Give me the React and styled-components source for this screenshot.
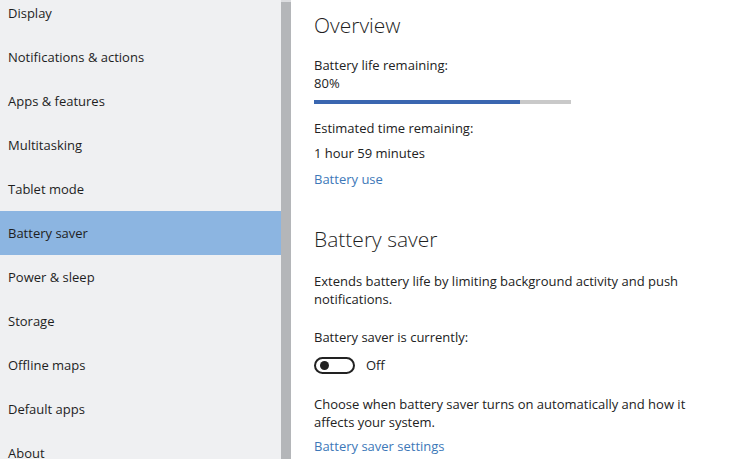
import React from 'react'
import styled, { createGlobalStyle } from 'styled-components'

const GlobalStyle = createGlobalStyle`
  html, body {
    margin: 0;
    padding: 0;
    background: #ffffff;
    overflow: hidden;
  }
  body {
    font-family: "Open Sans", "Noto Sans", sans-serif;
    color: #222;
  }
`

const navItems = [
  'Display',
  'Notifications & actions',
  'Apps & features',
  'Multitasking',
  'Tablet mode',
  'Battery saver',
  'Power & sleep',
  'Storage',
  'Offline maps',
  'Default apps',
  'About',
]

const App = () => {
  const battery = 80
  return (
    <>
      <GlobalStyle />
      <Window>
        <Sidebar>
          <NavList>
            {navItems.map((item) => (
              <NavItem key={item} $active={item === 'Battery saver'}>{item}</NavItem>
            ))}
          </NavList>
        </Sidebar>
        <ScrollTrack />
        <Content>
          <Heading>Overview</Heading>
          <Label $mt={17}>Battery life remaining:</Label>
          <Label>{battery}%</Label>
          <Bar>
            <BarFill style={{ width: battery + '%' }} />
          </Bar>
          <Label $mt={15}>Estimated time remaining:</Label>
          <Label $mt={7}>1 hour 59 minutes</Label>
          <Link $mt={8}>Battery use</Link>

          <Heading $mt={37}>Battery saver</Heading>
          <Paragraph $mt={19}>
            Extends battery life by limiting background activity and push notifications.
          </Paragraph>
          <Label $mt={20}>Battery saver is currently:</Label>
          <ToggleRow>
            <Toggle>
              <Knob />
            </Toggle>
            <ToggleText>Off</ToggleText>
          </ToggleRow>
          <Paragraph $mt={21}>
            Choose when battery saver turns on automatically and how it affects your system.
          </Paragraph>
          <Link $mt={6}>Battery saver settings</Link>
        </Content>
      </Window>
    </>
  )
}

export default App

const Window = styled.div`
  display: flex;
  height: 459px;
  width: 735px;
  overflow: hidden;
`
const Sidebar = styled.div`
  width: 281px;
  flex-shrink: 0;
  background-color: #eff0f2;
  overflow: hidden;
`
const NavList = styled.div`
  margin-top: -9px;
`
const NavItem = styled.div`
  height: 44px;
  line-height: 44px;
  padding-left: 8px;
  font-size: 13px;
  color: #1e1e1e;
  background-color: ${(p) => (p.$active ? '#8cb5e1' : 'transparent')};
`
const ScrollTrack = styled.div`
  width: 10px;
  flex-shrink: 0;
  background-color: #b4b6b9;
  border-top: 2px solid #dcdde0;
`
const Content = styled.div`
  flex: 1;
  padding: 11px 0 0 23px;
`
const Heading = styled.div`
  font-size: 21px;
  font-weight: 300;
  line-height: 28px;
  color: #1f1f1f;
  margin-top: ${(p) => p.$mt || 0}px;
`
const Label = styled.div`
  font-size: 13px;
  line-height: 18px;
  margin-top: ${(p) => p.$mt || 0}px;
`
const Paragraph = styled.div`
  font-size: 13px;
  line-height: 18px;
  max-width: 385px;
  margin-top: ${(p) => p.$mt || 0}px;
`
const Link = styled.div`
  font-size: 13px;
  line-height: 18px;
  color: #3d78b8;
  margin-top: ${(p) => p.$mt || 0}px;
`
const Bar = styled.div`
  width: 257px;
  height: 4px;
  margin-top: 8px;
  background-color: #c9c9c9;
`
const BarFill = styled.div`
  height: 100%;
  background-color: #3a66b0;
`
const ToggleRow = styled.div`
  display: flex;
  align-items: center;
  gap: 11px;
  margin-top: 10px;
`
const Toggle = styled.div`
  box-sizing: border-box;
  width: 41px;
  height: 17px;
  border: 2px solid #222;
  border-radius: 9px;
  display: flex;
  align-items: center;
  padding-left: 4px;
`
const Knob = styled.div`
  width: 9px;
  height: 9px;
  border-radius: 50%;
  background-color: #222;
`
const ToggleText = styled.div`
  font-size: 13px;
  line-height: 18px;
`
